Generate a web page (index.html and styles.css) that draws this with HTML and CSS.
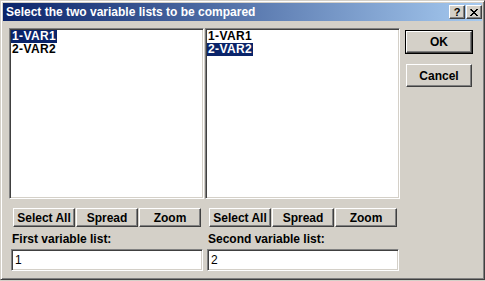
FILE: index.html
```html
<!DOCTYPE html>
<html lang="en">
  <head>
    <meta charset="UTF-8" />
    <title>Compare variable lists</title>
    <link rel="stylesheet" href="styles.css">
  </head>
  <body>
    <div class="dialog">
      <div class="titlebar">
        <span class="title">Select the two variable lists to be compared</span>
        <div class="caption-buttons">
          <span class="cap-btn help">?</span>
          <span class="cap-btn close">
            <svg width="8" height="7" viewBox="0 0 8 7">
              <path d="M0 0h2v1h1v1h2v-1h1v-1h2v1h-1v1h-1v1h-1v1h1v1h1v1h1v1h-2v-1h-1v-1h-2v1h-1v1h-2v-1h1v-1h1v-1h1v-1h-1v-1h-1z" fill="#000"/>
            </svg>
          </span>
        </div>
      </div>
      <div class="main">
        <div class="lists">
          <div class="panel">
            <div class="listbox">
              <div class="item"><span class="selected">1-VAR1</span></div>
              <div class="item"><span>2-VAR2</span></div>
            </div>
            <div class="tools">
              <button class="btn tool">Select All</button>
              <button class="btn tool">Spread</button>
              <button class="btn tool">Zoom</button>
            </div>
            <label class="field-label">First variable list:</label>
            <input class="field" type="text" value="1" />
          </div>
          <div class="panel">
            <div class="listbox">
              <div class="item"><span>1-VAR1</span></div>
              <div class="item"><span class="selected">2-VAR2</span></div>
            </div>
            <div class="tools">
              <button class="btn tool">Select All</button>
              <button class="btn tool">Spread</button>
              <button class="btn tool">Zoom</button>
            </div>
            <label class="field-label">Second variable list:</label>
            <input class="field" type="text" value="2" />
          </div>
        </div>
        <div class="actions">
          <div class="default-frame"><button class="btn action">OK</button></div>
          <button class="btn action cancel">Cancel</button>
        </div>
      </div>
    </div>
  </body>
</html>
```

FILE: styles.css
```css
* {
  box-sizing: border-box;
}

body {
  margin: 0;
  background: #d4d0c8;
  font-family: "Liberation Sans", Arial, sans-serif;
  font-size: 12px;
  color: #000;
}

.dialog {
  width: 485px;
  height: 280px;
  background: #d4d0c8;
  border: 1px solid;
  border-color: #d4d0c8 #404040 #404040 #d4d0c8;
  box-shadow: inset 1px 1px #fff, inset -1px -1px #808080;
  padding: 2px;
}

.titlebar {
  height: 18px;
  display: flex;
  align-items: center;
  justify-content: space-between;
  padding: 0 0 0 3px;
  background: linear-gradient(to right, #0a246a, #a6caf0);
}

.title {
  color: #fff;
  font-weight: bold;
  font-size: 12px;
  white-space: nowrap;
}

.caption-buttons {
  display: flex;
  gap: 1px;
}

.cap-btn {
  width: 16px;
  height: 14px;
  display: flex;
  align-items: center;
  justify-content: center;
  background: #d4d0c8;
  border: 1px solid;
  border-color: #fff #404040 #404040 #fff;
  box-shadow: inset -1px -1px #808080;
  font-weight: bold;
  font-size: 11px;
  line-height: 12px;
}

.main {
  display: flex;
  padding: 7px 0 0 6px;
}

.lists {
  display: grid;
  grid-template-columns: 195px 195px;
  column-gap: 1px;
}

.panel {
  display: flex;
  flex-direction: column;
}

.listbox {
  height: 171px;
  background: #fff;
  border: 1px solid;
  border-color: #808080 #fff #fff #808080;
  box-shadow: inset 1px 1px #404040, inset -1px -1px #d4d0c8;
  padding: 1px;
}

.item {
  height: 13px;
  line-height: 13px;
  font-weight: bold;
  font-size: 12px;
  letter-spacing: 0.4px;
}

.item span {
  display: inline-block;
  padding: 0 1px;
}

.item .selected {
  background: #0a246a;
  color: #fff;
}

.btn {
  font-family: "Liberation Sans", Arial, sans-serif;
  font-weight: bold;
  font-size: 12px;
  color: #000;
  background: #d4d0c8;
  border: 1px solid;
  border-color: #fff #404040 #404040 #fff;
  box-shadow: inset -1px -1px #808080;
  padding: 0;
  margin: 0;
}

.tools {
  display: flex;
  gap: 1px;
  margin: 9px 0 0 4px;
}

.tool {
  width: 62px;
  height: 19px;
}

.field-label {
  font-weight: bold;
  line-height: 14px;
  margin: 5px 0 0 3px;
}

.field {
  width: 192px;
  height: 22px;
  margin: 3px 0 0 2px;
  background: #fff;
  border: 1px solid;
  border-color: #808080 #fff #fff #808080;
  box-shadow: inset 1px 1px #404040, inset -1px -1px #d4d0c8;
  padding: 0 3px;
  font-family: "Liberation Sans", Arial, sans-serif;
  font-size: 12px;
  outline: none;
}

.actions {
  display: flex;
  flex-direction: column;
  margin: 2px 0 0 5px;
}

.default-frame {
  width: 68px;
  height: 24px;
  border: 1px solid #000;
}

.action {
  width: 66px;
  height: 22px;
}

.cancel {
  height: 23px;
  margin: 10px 0 0 1px;
}
```
